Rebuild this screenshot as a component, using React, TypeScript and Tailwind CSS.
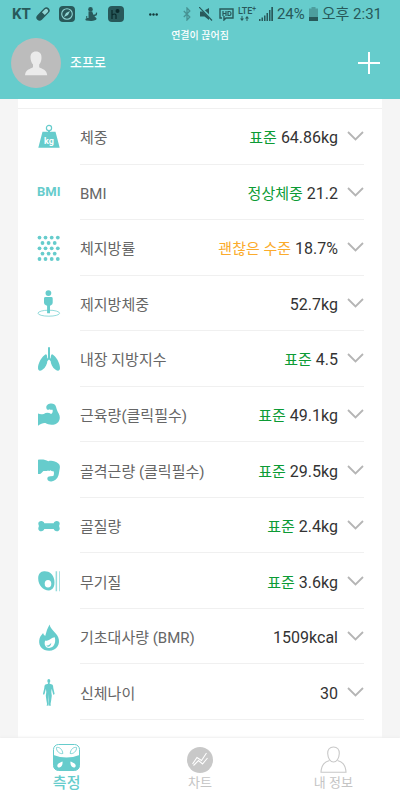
import React from "react";

const icons: Record<string, React.ReactNode> = {
  weight: (
    <>
      <circle cx="12" cy="5" r="2.6" fill="none" stroke="currentColor" strokeWidth="1.2" />
      <path d="M11 7.5h2v2h-2zM5.5 8.8h13l4.200 16H1.300z" />
      <text
        x="12"
        y="20.5"
        textAnchor="middle"
        fill="#fff"
        fontSize="9"
        fontWeight="700"
        fontFamily="Roboto, sans-serif"
      >
        kg
      </text>
    </>
  ),
  fat: (
    <>
      {[3.6, 14.3, 25].map((y) =>
        [2.5, 8.5, 14.7, 20.8].map((x) => <circle key={`${x}-${y}`} cx={x} cy={y} r="1.9" />)
      )}
      {[9, 19.6].map((y) =>
        [5.5, 11.6, 17.7].map((x) => <circle key={`${x}-${y}`} cx={x} cy={y} r="1.9" />)
      )}
    </>
  ),
  lean: (
    <>
      <ellipse cx="11.8" cy="24.2" rx="10.8" ry="3" fill="none" stroke="currentColor" strokeWidth="0.7" />
      <circle cx="11.4" cy="4.1" r="2.9" />
      <path d="M8.5 8h5.8q1.4 0 1.4 1.4v4.4q0 1.6-1.7 2.4l-1 .5v7.6h-2.9v-7.6l-1.2-.5Q7 15.500 7 13.800V9.400Q7 8 8.500 8z" />
    </>
  ),
  lungs: (
    <>
      <path d="M11 2.300h2v10.500l2.200 2.400-1 1.200-2.200-2-2.200 2-1-1.200 2.200-2.400z" />
      <path d="M8.800 9.300C5 11 .8 18.500 1 23.300c.1 2.800 2.300 2.900 4.400 1.500 3.200-2.200 5-6 5-9.600 0-2-.2-6.300-1.600-5.900z" />
      <path d="M15.200 9.300c3.800 1.700 8 9.200 7.800 14-.1 2.800-2.300 2.900-4.400 1.500-3.200-2.200-5-6-5-9.600 0-2 .2-6.300 1.600-5.900z" />
    </>
  ),
  muscle: (
    <path d="M1 13.600c2.300.9 4 .7 5.800.3 2.200-1.500 4.900-1.600 7.300 0 1.500-.8 1.900-2.400 1.500-4.200-1.500.3-2.500-.1-3.100-.5-1.200 1-2.800.5-3-.8-.9-2.300 1.200-4.500 4-4.800 2.600-.3 4.800.8 5.500 3.200.6 2.500 1.400 4.600 2.700 6.800 1.600 3 1.500 6.200-.3 8.300-2.900 3.200-8.700 3.900-13 1.200C6 22.800 4 23.800 1 25.800z" />
  ),
  skeletal: (
    <path d="M1 3.700c4-.5 7.200-.4 10.300 1.500 3.300-.8 7-.3 10 2.400 1.600 1.400 1.900 3 1.400 5.300-.5 2-.6 4.300-1.300 6.600-1 3.500-3.500 5.500-7 5.900-2 .2-4-.8-4.100-2.700.1-1.800 1.700-2.600 3.400-2.400l2.600-.3c.8-1.500.9-3.300.3-4.800-1.500.4-2.300-.1-3.100-.9-.8.7-1.700.9-2.500.2-1.600.9-2.900.2-4.600.5-1.200.9-1.500 2.200-3.300 3.100L1 18z" />
  ),
  bone: (
    <path d="M4.300 9c1.600 0 2.700 1 3 2.200h9.400c.3-1.200 1.400-2.200 3-2.200 1.800 0 3 1.100 3 2.600 0 1.200-.6 1.700-.6 2.500s.6 1.400.6 2.600c0 1.500-1.200 2.600-3 2.600-1.600 0-2.700-1-3-2.200H7.300c-.3 1.200-1.400 2.200-3 2.200-1.800 0-3-1.100-3-2.600 0-1.200.6-1.800.6-2.600s-.6-1.300-.6-2.500C1.300 10.100 2.500 9 4.300 9z" />
  ),
  mineral: (
    <>
      <path d="M7 4.300c5.200-.4 9.300 3 10.300 8.700.9 6-1.400 10.400-5.500 10.400C6.500 23.500 1.200 18 1.200 11.400 1.200 7.200 3.500 4.500 7 4.300z" />
      <ellipse cx="11" cy="16.800" rx="3.300" ry="3.800" fill="#fff" />
      <path d="M18.600 4.300h1.500v20h-1.500zM22 4.300h.8v20H22z" opacity=".7" />
    </>
  ),
  flame: (
    <>
      <path d="M12.600 1.500c.7 5 6.300 7.300 8.600 12.800 2.700 6.700-1.500 13.400-9 13.500C5.500 27.800 1.600 23 2.200 17.500c.3-3.200 2-5.200 3.900-7.400.4 1.500 1 2.300 2.100 2.800 1.300-4.200 2-7.400 4.400-11.400z" />
      <path
        d="M17.800 14.300c-3.300.2-4.600 2.700-7 3.300-1.600.4-2.600-.2-2.600-.2-1.600 4.100.6 7.600 4 7.500 4.600-.1 7-5.100 5.600-10.600z"
        fill="#fff"
      />
      <path d="M9.300 22.500c1.200.4 3.200-.2 5-2.700-.2 2.800-1.700 4-3.300 3.900-.9-.1-1.500-.5-1.700-1.200z" />
    </>
  ),
  body: (
    <>
      <ellipse cx="11.800" cy="3" rx="1.500" ry="1.900" />
      <path d="M11 4.600h1.600v1.200l2.500.8c1 .5 1 1.500 1.200 3.300l1.300 5.800-.9 1.300-.7-1.200-1.300-5-.4 3.300.5 3.700-.6 4.400-.7 4 .6 1.400-2 .1-.2-1.800.1-4-.2-6-.2 6 .1 4-.2 1.800-2-.1.6-1.400-.7-4-.6-4.400.5-3.700-.4-3.300-1.300 5-.7 1.200-.9-1.300 1.300-5.800c.2-1.800.2-2.800 1.200-3.300l2.500-.8z" />
    </>
  ),
};

const measurements = [
  { icon: "weight", name: "체중", status: "표준", value: "64.86kg" },
  { icon: "bmi", name: "BMI", status: "정상체중", value: "21.2" },
  { icon: "fat", name: "체지방률", status: "괜찮은 수준", value: "18.7%", warn: true },
  { icon: "lean", name: "제지방체중", value: "52.7kg" },
  { icon: "lungs", name: "내장 지방지수", status: "표준", value: "4.5" },
  { icon: "muscle", name: "근육량(클릭필수)", status: "표준", value: "49.1kg" },
  { icon: "skeletal", name: "골격근량 (클릭필수)", status: "표준", value: "29.5kg" },
  { icon: "bone", name: "골질량", status: "표준", value: "2.4kg" },
  { icon: "mineral", name: "무기질", status: "표준", value: "3.6kg" },
  { icon: "flame", name: "기초대사량 (BMR)", value: "1509kcal" },
  { icon: "body", name: "신체나이", value: "30" },
];

const StatusBar: React.FC = () => (
  <div className="flex h-7 items-center justify-between pl-3 pr-[18px] text-[#28595a]">
    <div className="flex items-center">
      <span className="w-6 text-[15px] leading-5 font-bold">KT</span>
      <svg className="w-[14px] h-[14px]" viewBox="0 0 14 14">
        <g transform="rotate(-45 7 7)">
          <rect x="-1" y="3.800" width="16" height="6.400" rx="3.200" fill="currentColor" />
          <path d="M7.500 5h4a2 2 0 0 1 0 4h-4z" fill="#8fd5d4" />
        </g>
      </svg>
      <svg className="ml-[9px] w-4 h-4" viewBox="0 0 16 16">
        <rect width="16" height="16" rx="4" fill="currentColor" />
        <circle cx="8" cy="8" r="5.300" fill="none" stroke="#8fd5d4" strokeWidth="1.100" />
        <path d="M11 5L7 7 5 11l4-2z" fill="#8fd5d4" />
      </svg>
      <svg className="ml-[10px] w-[13px] h-[14px]" viewBox="0 0 13 14" fill="currentColor">
        <circle cx="5.500" cy="2.400" r="2.300" />
        <path d="M3.500 4.500h3.700l1.200 3.300 2.200-.6.400-1.700 1.200.3-.4 2.400-2.400 1 1.600 1.500c2 2-1.800 3.300-5 3.200L1 13.500C-.5 12 1 11 3.500 11z" />
        <path d="M1 9l2 1-2 1z" />
      </svg>
      <svg className="ml-[10px] w-4 h-4" viewBox="0 0 16 16">
        <rect width="16" height="16" rx="4" fill="currentColor" />
        <path d="M4 4v9M4 9q3-2 4 0v4" fill="none" stroke="#0b2b2c" strokeWidth="1.200" />
        <circle cx="9.500" cy="5" r="2" fill="#0b2b2c" />
      </svg>
      <svg className="ml-[25px] w-[9px] h-[3px]" viewBox="0 0 9 3" fill="#143a3b">
        <circle cx="1.300" cy="1.500" r="1.200" />
        <circle cx="4.500" cy="1.500" r="1.200" />
        <circle cx="7.700" cy="1.500" r="1.200" />
      </svg>
    </div>
    <div className="flex items-center">
      <svg className="w-2 h-[14px] opacity-50" viewBox="0 0 8 14" fill="none" stroke="currentColor" strokeWidth="1.300">
        <path d="M.8 4l6 6L4 13V1l2.800 3-6 6" />
      </svg>
      <svg className="ml-2 w-[14px] h-[14px]" viewBox="0 0 14 14" fill="currentColor">
        <path d="M1 4.500h2.500L10 1v12L5.500 9.500H1z" />
        <path d="M1 0l13 13" stroke="#66cccc" strokeWidth="2.400" />
        <path d="M0 0l13 13.500" stroke="currentColor" strokeWidth="1.200" />
      </svg>
      <svg className="ml-[6px] w-[15px] h-[14px]" viewBox="0 0 15 14" fill="none" stroke="currentColor">
        <path d="M3 11H1V2h13v9H7l-2 2v-4" strokeWidth="1.400" />
        <path d="M4 4v5M7 4v5M4 6.500h3M9 4.500h1.500q1.500 0 1.500 2t-1.500 2H9z" strokeWidth="1.200" />
      </svg>
      <span className="ml-1 flex w-[18px] flex-col">
        <span className="text-[9px] leading-[9px] font-medium whitespace-nowrap">
          LTE<sup>+</sup>
        </span>
        <svg className="ml-[2px] w-[9px] h-[5px]" viewBox="0 0 9 5" fill="currentColor">
          <path d="M1.500 0h1v2.500H4L2 5 0 2.500h1.500zM6.500 5h1V2.500H9L7 0 5 2.500h1.500z" />
        </svg>
      </span>
      <svg className="ml-[3px] w-[14px] h-[14px]" viewBox="0 0 14 14" fill="currentColor">
        <path d="M0 12h1.500v2H0zM2.500 10.500H4V14H2.500zM5 8.500h1.500V14H5zM7.500 6H9v8H7.500zM10 3h1.500v11H10zM12.300 0H14v14h-1.700z" />
      </svg>
      <span className="ml-1 text-[15px] leading-5">24%</span>
      <svg className="ml-1 w-[9px] h-[14px]" viewBox="0 0 9 14" fill="currentColor">
        <path d="M2.500 0h4v1.500H9V14H0V1.500h2.500z" opacity=".4" />
        <path d="M0 10h9v4H0z" />
      </svg>
      <span className="ml-1 text-[15px] leading-5">오후 2:31</span>
    </div>
  </div>
);

const Header: React.FC = () => (
  <header className="bg-[#66cccc] pb-[11px]">
    <StatusBar />
    <div className="grid grid-cols-[1fr_auto_1fr] px-[11px] text-white">
      <div className="mt-[10px] flex items-center gap-[9px]">
        <svg className="w-[50px] h-[50px]" viewBox="0 0 50 50">
          <circle cx="25" cy="25" r="25" fill="#bcbcbc" />
          <path
            d="M25 13.500c3.800 0 5.700 2.500 5.500 6.200 0 2.700-.8 5.300-2.300 6.800v2.800c3.500 2 7.300 2.200 8 8H14c.7-5.800 4.500-6 8-8v-2.800c-1.500-1.500-2.400-4.100-2.500-6.800-.2-3.700 1.700-6.200 5.500-6.200z"
            fill="#ebebeb"
          />
        </svg>
        <h1 className="text-[13px] leading-5 font-medium whitespace-nowrap">조프로</h1>
      </div>
      <p className="text-[10px] leading-4 font-medium">연결이 끊어짐</p>
      <button type="button" aria-label="추가" className="mt-[10px] mr-[9px] self-center justify-self-end">
        <svg className="block w-[22px] h-[22px]" viewBox="0 0 22 22" stroke="currentColor" strokeWidth="2">
          <path d="M11 0v22M0 11h22" />
        </svg>
      </button>
    </div>
  </header>
);

const App: React.FC = () => {
  return (
    <div
      lang="ko"
      className="flex min-h-screen flex-col bg-[#f5f5f5] font-['Roboto','Noto_Sans_CJK_KR',sans-serif]"
    >
      <Header />

      {/* measurement list */}
      <main className="mx-[18px] flex flex-1 flex-col bg-white pt-[9px] pb-[18px]">
        <ul className="grid flex-1 auto-rows-fr border-t border-[#f0f0f0]">
          {measurements.map((item) => (
            <li key={item.name} className="flex items-stretch pl-[19px] pr-[18px]">
              <div className="flex w-[43px] items-center text-[#66cccc]">
                {item.icon === "bmi" ? (
                  <span className="text-[13px] leading-5 font-bold">BMI</span>
                ) : (
                  <svg className="w-6 h-7" viewBox="0 0 24 28" fill="currentColor">
                    {icons[item.icon]}
                  </svg>
                )}
              </div>
              <div className="flex flex-1 items-center border-b border-[#f0f0f0] text-[15px] leading-5">
                <span className="flex-1 pt-1 text-[#666666]">{item.name}</span>
                {item.status && (
                  <span className={item.warn ? "mr-1 pt-1 text-[#fbab2c]" : "mr-1 pt-1 text-[#0c9b35]"}>
                    {item.status}
                  </span>
                )}
                <span className="pt-1 text-base leading-5 text-[#333333]">{item.value}</span>
                <button type="button" aria-label={item.name} className="ml-[9px]">
                  <svg
                    className="block w-[17px] h-[10px]"
                    viewBox="0 0 17 10"
                    fill="none"
                    stroke="#b5b5b5"
                    strokeWidth="1.800"
                  >
                    <path d="M1 1l7.500 7.500L16 1" />
                  </svg>
                </button>
              </div>
            </li>
          ))}
        </ul>
      </main>

      {/* bottom tabs */}
      <nav className="grid h-[62px] grid-cols-3 bg-white text-[13px] leading-5 text-[#c4c4c4] shadow-[0_-1px_2px_#eeeeee]">
        <a href="#measure" className="flex flex-col items-center pt-[6px] text-[15px] text-[#66cccc]">
          <svg className="w-[27px] h-[27px]" viewBox="0 0 27 27">
            <rect x=".5" y=".5" width="26" height="26" rx="5" fill="#fff" stroke="currentColor" />
            <path d="M.5 11Q13.500 16 26.500 11v10.500a5 5 0 0 1-5 5h-16a5 5 0 0 1-5-5z" fill="currentColor" />
            <g fill="none" stroke="currentColor" strokeWidth=".8">
              <path d="M3.500 3.500c3-.8 6 2 6.300 6-3 .8-6.800-2.500-6.300-6z" />
              <path d="M23.500 3.500c-3-.8-6 2-6.300 6 3 .8 6.800-2.500 6.300-6z" />
            </g>
            <path
              d="M9.500 17.500c.5 3-1 5.800-3.200 6-1.800.1-2.600-1.700-1.500-3.200 1-1.300 2.700-1.900 4.700-2.800zM17.500 17.500c-.5 3 1 5.800 3.200 6 1.800.1 2.600-1.700 1.500-3.200-1-1.300-2.700-1.900-4.700-2.800z"
              fill="#fff"
            />
          </svg>
          <span className="mt-[2px] font-medium">측정</span>
        </a>
        <a href="#chart" className="flex flex-col items-center pt-[9px]">
          <svg className="w-[26px] h-[26px]" viewBox="0 0 26 26">
            <circle cx="13" cy="13" r="13" fill="#c8c8c8" />
            <g fill="none" stroke="#fff" strokeWidth="1.100">
              <path d="M5.500 17L10 10.500l4.500 3L19.500 6" />
              <path d="M6.500 18.500l5-5 4 3.500L20.500 11" />
            </g>
          </svg>
          <span>차트</span>
        </a>
        <a href="#profile" className="flex flex-col items-center pt-[8px]">
          <svg className="w-[27px] h-[27px]" viewBox="0 0 27 27" fill="none" stroke="#c8c8c8" strokeWidth="1.100">
            <path d="M13.500 1c3.800 0 6 2.500 5.800 6.500-.2 4.500-2.500 8.500-5.800 8.500s-5.600-4-5.800-8.500C7.500 3.500 9.700 1 13.500 1z" />
            <path d="M9.500 14.500C5 16 1.500 18 1 26.300h25C25.500 18 22 16 17.500 14.500" />
          </svg>
          <span>내 정보</span>
        </a>
      </nav>
    </div>
  );
};

export default App;
